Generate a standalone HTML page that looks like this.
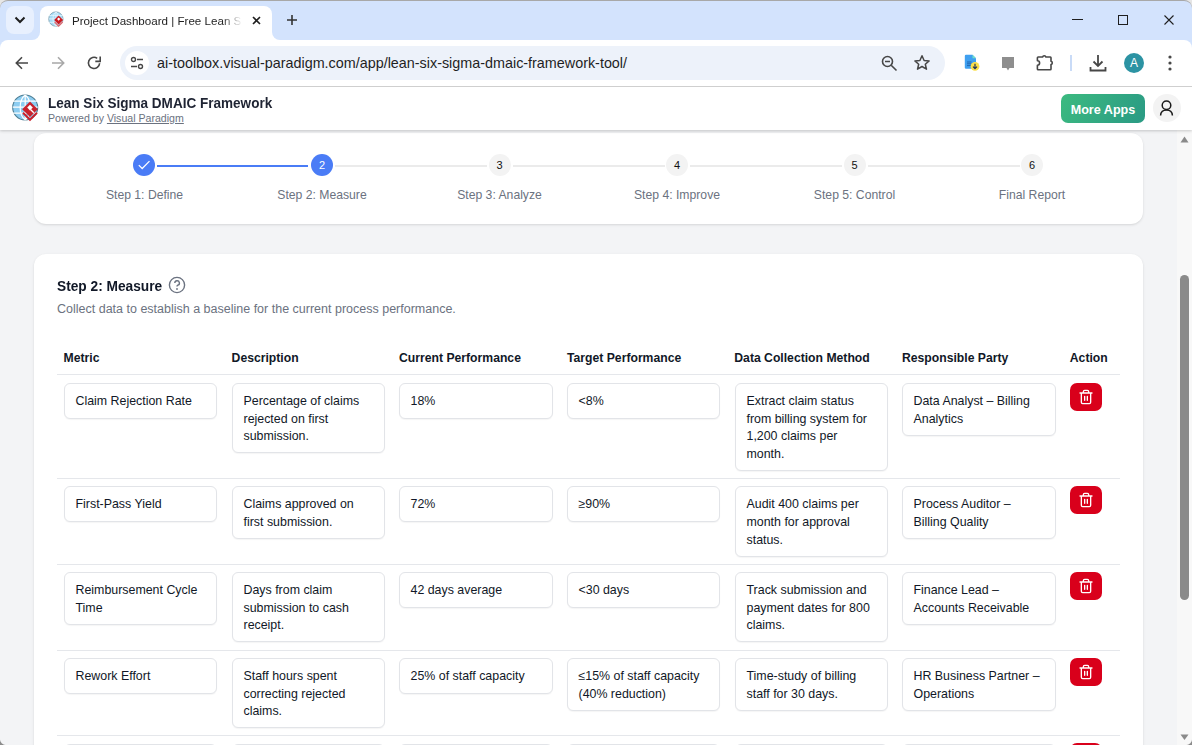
<!DOCTYPE html>
<html><head><meta charset="utf-8">
<style>
*{box-sizing:border-box}
html,body{margin:0;padding:0;width:1192px;height:745px;overflow:hidden;background:#e6e6e6;font-family:"Liberation Sans",sans-serif}
.abs{position:absolute}
/* chrome */
#tabstrip{position:absolute;left:0;top:0;width:1192px;height:40px;background:#d3e3fd;border-top:1px solid #a8a8a8;border-radius:8px 8px 0 0}
#toolbar{position:absolute;left:0;top:40px;width:1192px;height:46px;background:#fff}
#tbline{position:absolute;left:0;top:86px;width:1192px;height:1px;background:#d0d0d0}
#apphdr{position:absolute;left:0;top:87px;width:1192px;height:43px;background:#fff;z-index:3;box-shadow:0 1px 2px rgba(0,0,0,.1),0 2px 3px rgba(0,0,0,.07)}
#page{position:absolute;left:0;top:130px;width:1177px;height:615px;background:#f3f4f6;overflow:hidden}
#sb{position:absolute;left:1177px;top:130px;width:15px;height:615px;background:#f8f8f8}
.card{position:absolute;left:34px;width:1109px;background:#fff;border-radius:12px;box-shadow:0 1px 3px 0 rgba(0,0,0,.1),0 1px 2px -1px rgba(0,0,0,.1)}
.circ{position:absolute;width:22px;height:22px;border-radius:50%;font-size:11px;line-height:22px;text-align:center;color:#111}
.circ.on{background:#4a7cf6;color:#fff}
.circ.off{background:#f3f3f3}
.slbl{position:absolute;top:188px;width:177px;text-align:center;font-size:12.2px;color:#6b7280;white-space:nowrap}
.th{position:absolute;top:350.7px;font-size:12.2px;font-weight:bold;color:#111827;white-space:nowrap}
.hl{position:absolute;left:57px;width:1063px;height:1px;background:#e5e7eb}
.box{position:absolute;width:153px;min-height:36px;border:1px solid #e2e4e8;border-radius:6px;padding:8.6px 10.5px 6.15px;font-size:12.4px;line-height:17.9px;color:#111827;white-space:nowrap;background:#fff;box-shadow:0 1px 1px rgba(0,0,0,.04)}
.del{position:absolute;left:1070px;width:32px;height:28px;border-radius:7px;background:#d9001b}
.del svg{position:absolute;left:8px;top:6px}
</style></head><body>

<!-- tab strip -->
<div id="tabstrip"></div>
<div class="abs" style="left:6px;top:6px;width:28px;height:28px;border-radius:8px;background:#e8f0fe"></div>
<svg class="abs" style="left:14px;top:15px" width="12" height="10" viewBox="0 0 12 10"><path d="M1.5 2.5 L6 7 L10.5 2.5" fill="none" stroke="#1f1f1f" stroke-width="2"/></svg>
<!-- active tab -->
<div class="abs" style="left:40px;top:6px;width:232px;height:35px;background:#fff;border-radius:8px 8px 0 0"></div>
<div class="abs" style="left:32px;top:32px;width:8px;height:8px;background:#fff"></div>
<div class="abs" style="left:32px;top:32px;width:8px;height:8px;background:#d3e3fd;border-radius:0 0 8px 0"></div>
<div class="abs" style="left:272px;top:32px;width:8px;height:8px;background:#fff"></div>
<div class="abs" style="left:272px;top:32px;width:8px;height:8px;background:#d3e3fd;border-radius:0 0 0 8px"></div>
<!-- favicon -->
<svg class="abs" style="left:45.7px;top:9.4px" width="20.7" height="20.7" viewBox="0 0 36 36"><circle cx="17.2" cy="17.5" r="12.5" fill="#a6dcf6" stroke="#8aa9b8" stroke-width="1.6"/><path d="M5 11.2H29.5M4.7 17.2H29.8M5 23.2H29.5M17.2 5V30M17.2 5C10.5 10 10.5 25 17.2 30M17.2 5C23.9 10 23.9 25 17.2 30" fill="none" stroke="#e6f5fd" stroke-width="1.4"/><path d="M14.2 19.3L22 11.5L29.8 19.3L22 27.1Z" fill="#cc1a22"/><path d="M19.2 17.6L22 14.8L24.8 17.6L22 20.4Z" fill="#fff"/><path d="M15 22.8L22 29.8L29 22.8" fill="none" stroke="#e06a70" stroke-width="2.4"/></svg>
<div class="abs" style="left:72px;top:13.7px;font-size:11.6px;color:#1f1f1f;white-space:nowrap;width:172px;overflow:hidden;-webkit-mask-image:linear-gradient(90deg,#000 150px,transparent 170px)">Project Dashboard | Free Lean Six Sigma</div>
<svg class="abs" style="left:251.5px;top:15.5px" width="9" height="9" viewBox="0 0 9 9"><path d="M1 1L8 8M8 1L1 8" stroke="#1f1f1f" stroke-width="1.6"/></svg>
<svg class="abs" style="left:287px;top:15px" width="10" height="10" viewBox="0 0 10 10"><path d="M5 0V10M0 5H10" stroke="#333" stroke-width="1.6"/></svg>
<!-- window controls -->
<div class="abs" style="left:1072px;top:19px;width:11px;height:1px;background:#1f1f1f"></div>
<div class="abs" style="left:1118px;top:15px;width:10px;height:10px;border:1px solid #1f1f1f"></div>
<svg class="abs" style="left:1164px;top:15px" width="10" height="10" viewBox="0 0 10 10"><path d="M0.5 0.5L9.5 9.5M9.5 0.5L0.5 9.5" stroke="#1f1f1f" stroke-width="1.1"/></svg>

<!-- toolbar -->
<div id="toolbar"></div><div class="abs" style="left:0;top:40px;width:8px;height:8px;background:#d3e3fd"></div><div class="abs" style="left:0;top:40px;width:8px;height:8px;background:#fff;border-radius:8px 0 0 0"></div><div class="abs" style="left:1184px;top:40px;width:8px;height:8px;background:#d3e3fd"></div><div class="abs" style="left:1184px;top:40px;width:8px;height:8px;background:#fff;border-radius:0 8px 0 0"></div>
<div id="tbline"></div>
<svg class="abs" style="left:15px;top:55.5px" width="14" height="14" viewBox="0 0 14 14"><path d="M7 1.3L1.3 7L7 12.7M1.3 7H13" fill="none" stroke="#474747" stroke-width="1.6"/></svg>
<svg class="abs" style="left:51px;top:55.5px" width="14" height="14" viewBox="0 0 14 14"><path d="M7 1.3L12.7 7L7 12.7M12.7 7H1" fill="none" stroke="#a8a8a8" stroke-width="1.6"/></svg>
<svg class="abs" style="left:86px;top:55px" width="16" height="16" viewBox="0 0 16 16"><path d="M11.2 3.3A5.6 5.6 0 1 0 13.6 8.2" fill="none" stroke="#474747" stroke-width="1.6"/><path d="M9.3 6.4H14.2V1.6" fill="none" stroke="#474747" stroke-width="1.6"/></svg>
<div class="abs" style="left:120px;top:46px;width:825px;height:34px;border-radius:17px;background:#edf2fa"></div>
<div class="abs" style="left:125px;top:51px;width:24px;height:24px;border-radius:12px;background:#fff"></div>
<svg class="abs" style="left:130px;top:56px" width="14" height="14" viewBox="0 0 14 14"><circle cx="3.5" cy="3.5" r="2" fill="none" stroke="#474747" stroke-width="1.4"/><path d="M7 3.5H13M1 10.5H7" stroke="#474747" stroke-width="1.4"/><circle cx="10.5" cy="10.5" r="2" fill="none" stroke="#474747" stroke-width="1.4"/></svg>
<div class="abs" style="left:157px;top:55px;font-size:14.36px;color:#1f1f1f;white-space:nowrap">ai-toolbox.visual-paradigm.com/app/lean-six-sigma-dmaic-framework-tool/</div>
<svg class="abs" style="left:881px;top:55px" width="17" height="17" viewBox="0 0 17 17"><circle cx="6.5" cy="6.5" r="5" fill="none" stroke="#474747" stroke-width="1.6"/><path d="M4 6.5H9M10.2 10.2L15.5 15.5" stroke="#474747" stroke-width="1.6"/></svg>
<svg class="abs" style="left:913px;top:54px" width="18" height="18" viewBox="0 0 18 18"><path d="M9 1.8L11.1 6.5L16.1 6.9L12.3 10.2L13.5 15.2L9 12.5L4.5 15.2L5.7 10.2L1.9 6.9L6.9 6.5Z" fill="none" stroke="#474747" stroke-width="1.5" stroke-linejoin="round"/></svg>
<!-- extension icons -->
<svg class="abs" style="left:963px;top:53px" width="18" height="20" viewBox="0 0 18 20"><path d="M3 1.7H9.5L13 5.2V14.5A1.2 1.2 0 0 1 11.8 15.7H3A1.2 1.2 0 0 1 1.8 14.5V2.9A1.2 1.2 0 0 1 3 1.7Z" fill="#3fa0f0"/><path d="M9.5 1.7V5.2H13Z" fill="#6fe0c6"/><path d="M4 9H8.5M4 10.8H9M4 12.6H8" stroke="#1d5fa8" stroke-width="0.9"/><circle cx="12" cy="13.4" r="4.4" fill="#fbe04a"/><path d="M12 10.8V15.6M10 13.6L12 15.6L14 13.6" fill="none" stroke="#20335a" stroke-width="1.2"/></svg>
<svg class="abs" style="left:1001px;top:56px" width="14" height="16" viewBox="0 0 14 16"><path d="M1 1H13V12H8.5L7 14.5L5.5 12H1Z" fill="#8e8e8e"/></svg>
<svg class="abs" style="left:1034px;top:52px" width="22" height="20" viewBox="0 0 22 20"><path d="M4.2 5H8.6A1.7 1.7 0 0 1 11.9 5H16.3A0.8 0.8 0 0 1 17 5.8V9.3A1.7 1.7 0 0 1 17 12.6V16.9A0.8 0.8 0 0 1 16.2 17.7H4.2A0.8 0.8 0 0 1 3.4 16.9V13.2A2.2 2.2 0 0 0 3.4 8.8V5.8A0.8 0.8 0 0 1 4.2 5Z" fill="none" stroke="#474747" stroke-width="1.6" stroke-linejoin="round"/></svg>
<div class="abs" style="left:1070px;top:55px;width:2px;height:16px;background:#c9dbf7"></div>
<svg class="abs" style="left:1088px;top:53px" width="20" height="20" viewBox="0 0 20 20"><path d="M10 2V13M5.5 8.5L10 13L14.5 8.5M2.5 14V17.5H17.5V14" fill="none" stroke="#474747" stroke-width="1.8"/></svg>
<div class="abs" style="left:1124px;top:53px;width:20px;height:20px;border-radius:50%;background:#2c93a3;color:#fff;font-size:12px;line-height:20px;text-align:center">A</div>
<svg class="abs" style="left:1167px;top:55px" width="6" height="16" viewBox="0 0 6 16"><circle cx="3" cy="2" r="1.6" fill="#474747"/><circle cx="3" cy="8" r="1.6" fill="#474747"/><circle cx="3" cy="14" r="1.6" fill="#474747"/></svg>

<!-- app header -->
<div id="apphdr">
  <svg class="abs" style="left:8px;top:3px" width="36" height="36" viewBox="0 0 36 36"><circle cx="17.2" cy="17.5" r="12.5" fill="#8dcdf1" stroke="#4d7d92" stroke-width="1.1"/><path d="M5 11.2H29.5M4.7 17.2H29.8M5 23.2H29.5M17.2 5V30M17.2 5C10.5 10 10.5 25 17.2 30M17.2 5C23.9 10 23.9 25 17.2 30" fill="none" stroke="#fff" stroke-width="1.2"/><path d="M14.2 19.3L22 11.5L29.8 19.3L22 27.1Z" fill="#c9232d"/><path d="M19.2 17.6L22 14.8L24.8 17.6L22 20.4Z" fill="#fff"/><path d="M22.5 19.5L25.8 22.8" stroke="#fff" stroke-width="1.3"/><path d="M15 22.8L22 29.8L29 22.8" fill="none" stroke="#c9232d" stroke-width="2"/></svg>
  <div class="abs" style="left:48px;top:8px;font-size:14.8px;font-weight:bold;color:#1f2433;white-space:nowrap;transform-origin:0 0;transform:scaleX(0.915)">Lean Six Sigma DMAIC Framework</div>
  <div class="abs" style="left:48px;top:25px;font-size:10.6px;color:#6b7280;white-space:nowrap">Powered by <span style="text-decoration:underline">Visual Paradigm</span></div>
  <div class="abs" style="left:1061px;top:7px;width:84px;height:29px;border-radius:7px;background:linear-gradient(120deg,#3cba80,#2a9a84);color:#fff;font-weight:bold;font-size:12.6px;line-height:32px;text-align:center">More Apps</div>
  <div class="abs" style="left:1153px;top:7px;width:28px;height:28px;border-radius:50%;background:#f3f3f3"></div>
  <svg class="abs" style="left:1158px;top:12px" width="18" height="18" viewBox="0 0 18 18"><circle cx="8.5" cy="6.2" r="4.3" fill="none" stroke="#1a1a1a" stroke-width="1.5"/><path d="M2.6 16.6C2.6 13 5.2 10.9 8.5 10.9C11.8 10.9 14.4 13 14.4 16.6" fill="none" stroke="#1a1a1a" stroke-width="1.5"/></svg>
</div>

<!-- page -->
<div id="page"></div>
<div id="sb"></div>
<svg class="abs" style="left:1180px;top:136px" width="9" height="7" viewBox="0 0 9 7"><path d="M0.5 6.5L4.5 0.5L8.5 6.5Z" fill="#8a8a8a"/></svg>
<div class="abs" style="left:1180px;top:275px;width:9px;height:325px;border-radius:4.5px;background:#8a8a8a"></div>
<svg class="abs" style="left:1180px;top:734px" width="9" height="7" viewBox="0 0 9 7"><path d="M0.5 0.5L4.5 6L8.5 0.5Z" fill="#8a8a8a"/></svg>

<!-- card 1: stepper -->
<div class="card" style="top:133.3px;height:91px"></div>
<div class="abs" style="left:157px;top:165px;width:151px;height:2px;background:#4a7cf6"></div>
<div class="abs" style="left:335px;top:165px;width:152px;height:2px;background:#ebebeb"></div>
<div class="abs" style="left:513px;top:165px;width:152px;height:2px;background:#ebebeb"></div>
<div class="abs" style="left:690px;top:165px;width:152px;height:2px;background:#ebebeb"></div>
<div class="abs" style="left:868px;top:165px;width:152px;height:2px;background:#ebebeb"></div>
<div class="circ on" style="left:133.3px;top:154px"><svg width="22" height="22" viewBox="0 0 22 22" style="position:absolute;left:0;top:0"><path d="M5.8 11.1L9.2 14.5L16.5 7.1" fill="none" stroke="#fff" stroke-width="1.25"/></svg></div>
<div class="circ on" style="left:311px;top:154px">2</div>
<div class="circ off" style="left:488.5px;top:154px">3</div>
<div class="circ off" style="left:666px;top:154px">4</div>
<div class="circ off" style="left:843.5px;top:154px">5</div>
<div class="circ off" style="left:1021px;top:154px">6</div>
<div class="slbl" style="left:56px">Step 1: Define</div>
<div class="slbl" style="left:233.5px">Step 2: Measure</div>
<div class="slbl" style="left:411px">Step 3: Analyze</div>
<div class="slbl" style="left:588.5px">Step 4: Improve</div>
<div class="slbl" style="left:766px">Step 5: Control</div>
<div class="slbl" style="left:943.5px">Final Report</div>

<!-- card 2 -->
<div class="card" style="top:253.6px;height:600px"></div>
<div class="abs" style="left:57px;top:278px;font-size:14.6px;font-weight:bold;color:#111827;white-space:nowrap;transform-origin:0 0;transform:scaleX(0.94)">Step 2: Measure</div>
<svg class="abs" style="left:168px;top:276px" width="18" height="18" viewBox="0 0 18 18"><circle cx="9" cy="9" r="7.6" fill="none" stroke="#6b7280" stroke-width="1.4"/><path d="M6.8 7A2.3 2.3 0 1 1 9.8 9.2C9.2 9.5 9 9.9 9 10.6" fill="none" stroke="#6b7280" stroke-width="1.4"/><circle cx="9" cy="13" r="0.9" fill="#6b7280"/></svg>
<div class="abs" style="left:57px;top:301.5px;font-size:12.5px;color:#6b7280;white-space:nowrap">Collect data to establish a baseline for the current process performance.</div>

<div class="th" style="left:63.6px">Metric</div>
<div class="th" style="left:231.6px">Description</div>
<div class="th" style="left:399px">Current Performance</div>
<div class="th" style="left:567px">Target Performance</div>
<div class="th" style="left:734.3px">Data Collection Method</div>
<div class="th" style="left:902px">Responsible Party</div>
<div class="th" style="left:1069.8px">Action</div>
<div class="hl" style="top:374px"></div>
<div class="hl" style="top:478px"></div>
<div class="hl" style="top:564px"></div>
<div class="hl" style="top:650px"></div>
<div class="hl" style="top:735px"></div>

<!-- row 1 -->
<div class="box" style="left:64px;top:383px">Claim Rejection Rate</div>
<div class="box" style="left:232px;top:383px">Percentage of claims<br>rejected on first<br>submission.</div>
<div class="box" style="width:154px;left:399px;top:383px">18%</div>
<div class="box" style="left:567px;top:383px">&lt;8%</div>
<div class="box" style="left:735px;top:383px">Extract claim status<br>from billing system for<br>1,200 claims per<br>month.</div>
<div class="box" style="width:154px;left:902px;top:383px">Data Analyst – Billing<br>Analytics</div>
<div class="del" style="top:383px"><svg width="16" height="16" viewBox="0 0 24 24"><path d="M3 6h18M19 6v14c0 1-1 2-2 2H7c-1 0-2-1-2-2V6M8 6V4c0-1 1-2 2-2h4c1 0 2 1 2 2v2M10 11v6M14 11v6" fill="none" stroke="#fff" stroke-width="2" stroke-linecap="round" stroke-linejoin="round"/></svg></div>

<!-- row 2 -->
<div class="box" style="left:64px;top:486.4px">First-Pass Yield</div>
<div class="box" style="left:232px;top:486.4px">Claims approved on<br>first submission.</div>
<div class="box" style="width:154px;left:399px;top:486.4px">72%</div>
<div class="box" style="left:567px;top:486.4px">≥90%</div>
<div class="box" style="left:735px;top:486.4px;padding-bottom:6.5px">Audit 400 claims per<br>month for approval<br>status.</div>
<div class="box" style="width:154px;left:902px;top:486.4px">Process Auditor –<br>Billing Quality</div>
<div class="del" style="top:486.4px"><svg width="16" height="16" viewBox="0 0 24 24"><path d="M3 6h18M19 6v14c0 1-1 2-2 2H7c-1 0-2-1-2-2V6M8 6V4c0-1 1-2 2-2h4c1 0 2 1 2 2v2M10 11v6M14 11v6" fill="none" stroke="#fff" stroke-width="2" stroke-linecap="round" stroke-linejoin="round"/></svg></div>

<!-- row 3 -->
<div class="box" style="left:64px;top:572px">Reimbursement Cycle<br>Time</div>
<div class="box" style="left:232px;top:572px">Days from claim<br>submission to cash<br>receipt.</div>
<div class="box" style="width:154px;left:399px;top:572px">42 days average</div>
<div class="box" style="left:567px;top:572px">&lt;30 days</div>
<div class="box" style="left:735px;top:572px">Track submission and<br>payment dates for 800<br>claims.</div>
<div class="box" style="width:154px;left:902px;top:572px">Finance Lead –<br>Accounts Receivable</div>
<div class="del" style="top:572px"><svg width="16" height="16" viewBox="0 0 24 24"><path d="M3 6h18M19 6v14c0 1-1 2-2 2H7c-1 0-2-1-2-2V6M8 6V4c0-1 1-2 2-2h4c1 0 2 1 2 2v2M10 11v6M14 11v6" fill="none" stroke="#fff" stroke-width="2" stroke-linecap="round" stroke-linejoin="round"/></svg></div>

<!-- row 4 -->
<div class="box" style="left:64px;top:658px">Rework Effort</div>
<div class="box" style="left:232px;top:658px">Staff hours spent<br>correcting rejected<br>claims.</div>
<div class="box" style="width:154px;left:399px;top:658px">25% of staff capacity</div>
<div class="box" style="left:567px;top:658px">≤15% of staff capacity<br>(40% reduction)</div>
<div class="box" style="left:735px;top:658px">Time-study of billing<br>staff for 30 days.</div>
<div class="box" style="width:154px;left:902px;top:658px">HR Business Partner –<br>Operations</div>
<div class="del" style="top:658px"><svg width="16" height="16" viewBox="0 0 24 24"><path d="M3 6h18M19 6v14c0 1-1 2-2 2H7c-1 0-2-1-2-2V6M8 6V4c0-1 1-2 2-2h4c1 0 2 1 2 2v2M10 11v6M14 11v6" fill="none" stroke="#fff" stroke-width="2" stroke-linecap="round" stroke-linejoin="round"/></svg></div>

<!-- row 5 (partial) -->
<div class="box" style="left:64px;top:744px;height:30px"></div>
<div class="box" style="left:232px;top:744px;height:30px"></div>
<div class="box" style="width:154px;left:399px;top:744px;height:30px"></div>
<div class="box" style="left:567px;top:744px;height:30px"></div>
<div class="box" style="left:735px;top:744px;height:30px"></div>
<div class="box" style="width:154px;left:902px;top:744px;height:30px"></div>
<div class="del" style="top:743px"></div>

<!-- window corner bottom-left -->
<div class="abs" style="left:0;top:739px;width:6px;height:6px;background:radial-gradient(circle at 6px 0,rgba(0,0,0,0) 5.5px,#8c8c8c 6.5px)"></div>
<div class="abs" style="left:1186px;top:739px;width:6px;height:6px;background:radial-gradient(circle at 0 0,rgba(0,0,0,0) 5.5px,#8c8c8c 6.5px)"></div>
</body></html>
